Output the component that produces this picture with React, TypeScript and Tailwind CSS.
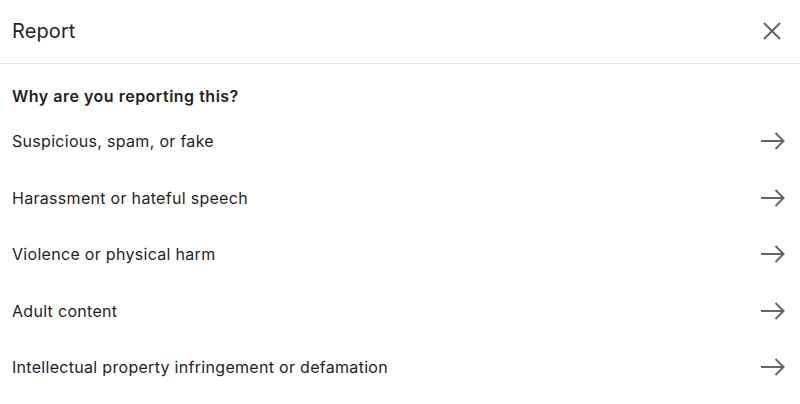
const reasons = [
  "Suspicious, spam, or fake",
  "Harassment or hateful speech",
  "Violence or physical harm",
  "Adult content",
  "Intellectual property infringement or defamation",
];

function ArrowIcon() {
  return (
    <svg width="24" height="20" viewBox="0 0 24 20" fill="none" stroke="#666666" strokeWidth="2" strokeLinecap="butt">
      <path d="M0 10 H22" />
      <path d="M14.5 2 L22.5 10 L14.5 18" />
    </svg>
  );
}

function CloseIcon() {
  return (
    <svg width="18" height="18" viewBox="0 0 18 18" fill="none" stroke="#666666" strokeWidth="2">
      <path d="M1 1 L17 17 M17 1 L1 17" />
    </svg>
  );
}

export default function App() {
  return (
    <div
      className="w-[800px] h-[404px] bg-white text-[#1f1f1f] overflow-hidden"
      style={{ fontFamily: "Inter, 'Noto Sans', sans-serif" }}
    >
      {/* header */}
      <div className="h-[64px] flex items-center justify-between pl-3 pr-[19px] border-b border-[#e8e8e8]">
        <h2 className="text-[20px] leading-6 text-[#262626] tracking-[0.1px] -mt-[1px]">Report</h2>
        <button className="flex items-center justify-center -mt-[1px]">
          <CloseIcon />
        </button>
      </div>

      {/* body */}
      <div className="pt-[20px]">
        <p className="px-3 text-[16px] leading-6 font-semibold tracking-[0.5px]">Why are you reporting this?</p>
        <ul className="mt-[5px]">
          {reasons.map((reason) => (
            <li key={reason} className="h-[56.5px] flex items-center justify-between pl-3 pr-[15px]">
              <span className="text-[16px] leading-6 tracking-[0.3px]">{reason}</span>
              <ArrowIcon />
            </li>
          ))}
        </ul>
      </div>
    </div>
  );
}
